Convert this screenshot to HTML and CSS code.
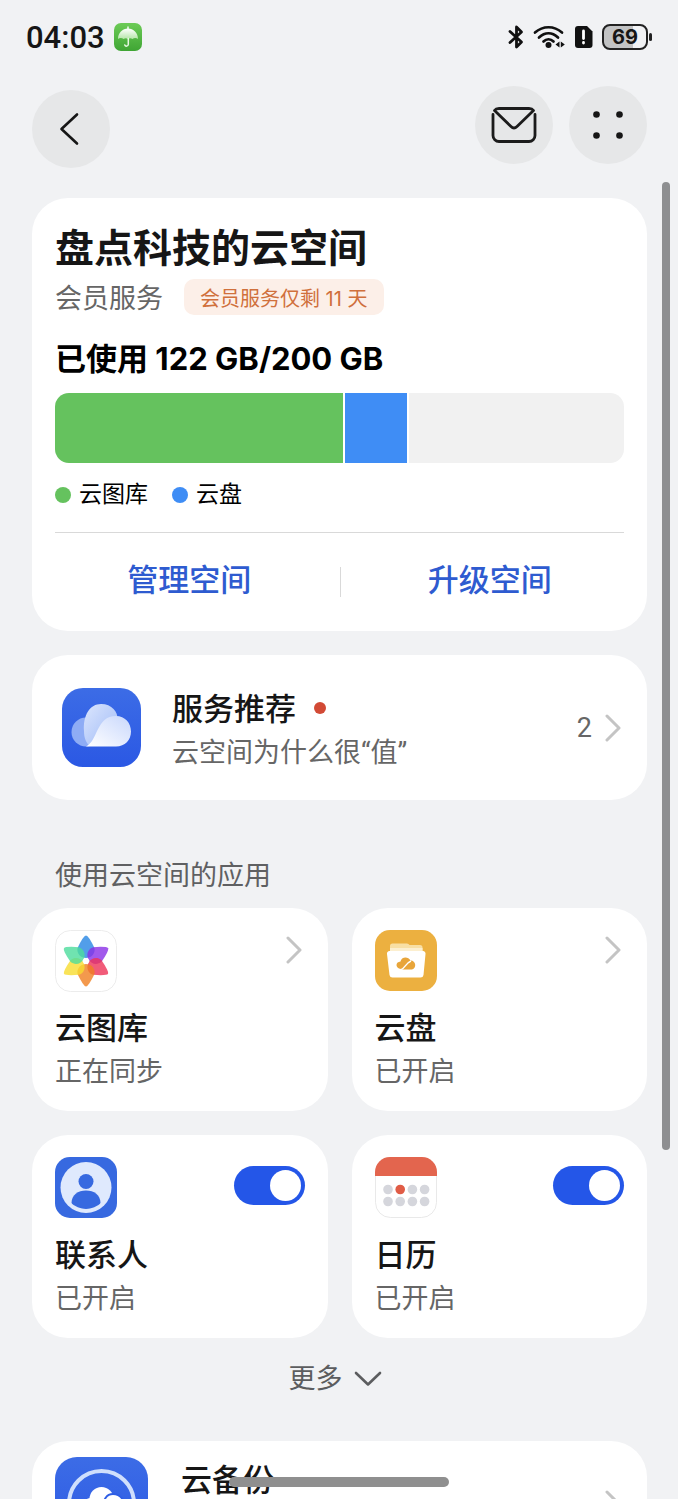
FILE: index.html
```html
<!DOCTYPE html>
<html lang="zh-CN">

<head>
  <meta charset="UTF-8">
  <meta name="viewport" content="width=device-width, initial-scale=1.0">
  <title>云空间</title>

  <link rel="stylesheet" href="styles.css">
</head>

<body>
  <div class="status-bar">
    <span class="time">04:03</span>
    <svg class="umbrella" width="28" height="28" viewBox="0 0 28 28" aria-hidden="true">
      <defs>
        <linearGradient id="leaf" x1="0" y1="0" x2="0" y2="1">
          <stop offset="0" stop-color="#6ccb56" />
          <stop offset="1" stop-color="#3fa534" />
        </linearGradient>
        <linearGradient id="canopy" x1="0" y1="0" x2="0" y2="1">
          <stop offset="0" stop-color="#fff" />
          <stop offset="1" stop-color="#b5e6a8" />
        </linearGradient>
      </defs>
      <rect width="28" height="28" rx="7" fill="url(#leaf)" />
      <path d="M14 4v2" stroke="#fff" stroke-width="1.4" stroke-linecap="round" />
      <path d="M4 16C4 10 8.500 5.500 14 5.500S24 10 24 16C22.500 14.800 20 14.800 18.500 16C17 14.900 15.500 14.900 14 16C12.500 14.900 11 14.900 9.500 16C8 14.800 5.500 14.800 4 16Z" fill="url(#canopy)" />
      <path d="M14.300 15.500V21.500a1.800 1.800 0 0 1-3.500 .4" fill="none" stroke="#e8f8e4" stroke-width="1.500" stroke-linecap="round" />
    </svg>

    <div class="status-icons">
      <svg width="16" height="24" viewBox="0 0 16 24" fill="none" stroke="#111" stroke-width="2.800" stroke-linejoin="round" stroke-linecap="round" aria-hidden="true">
        <path d="M2 6.500L13.500 17L8.500 22V2L13.500 7L2 17.500" />
      </svg>
      <svg width="32" height="24" viewBox="0 0 32 24" fill="none" stroke="#111" stroke-width="2.700" stroke-linecap="round" aria-hidden="true">
        <path d="M2 7.500C10 .5 21 .5 29 7.500" />
        <path d="M6 12.500C12 7 19 7 25 12.500" />
        <path d="M10.500 16.500C13.500 13.500 17.500 13.500 20.500 16.500" />
        <circle cx="15.500" cy="20" r="3" fill="#111" stroke="none" />
        <path d="M26.500 16.500v6l-4-3zM27.800 16.500v6l4-3z" fill="#111" stroke="none" />
      </svg>
      <svg width="19" height="24" viewBox="0 0 19 24" aria-hidden="true">
        <path d="M4 1H13L18.500 6.500V20a3 3 0 0 1-3 3H4a3 3 0 0 1-3-3V4a3 3 0 0 1 3-3z" fill="#111" />
        <path d="M9.500 6v7.500M9.500 17.500v.5" stroke="#fff" stroke-width="2.800" stroke-linecap="round" />
      </svg>
      <div class="battery"><span class="battery-level">69</span></div>
    </div>
  </div>

  <header class="toolbar">
    <button class="round-btn back" aria-label="返回">
      <svg width="24" height="34" viewBox="0 0 24 34" fill="none" stroke="#161616" stroke-width="2.600" stroke-linecap="round" stroke-linejoin="round">
        <path d="M18 2.500L2.500 17L18 31.500" />
      </svg>
    </button>
    <button class="round-btn" aria-label="消息">
      <svg width="46" height="38" viewBox="0 0 46 38" fill="none" stroke="#1b1b1b" stroke-width="2.800" stroke-linecap="round" stroke-linejoin="round">
        <path d="M2 8.500V29.500a6 6 0 0 0 6 6H38a6 6 0 0 0 6-6V8.500" />
        <path d="M3.500 4.500C4.500 3 6 2.500 8 2.500H38C40 2.500 41.500 3 42.500 4.500L26 20.500C24 22.500 22 22.500 20 20.500Z" />
      </svg>
    </button>
    <button class="round-btn" aria-label="更多选项">
      <svg width="32" height="30" viewBox="0 0 32 30" fill="#161616">
        <circle cx="4.500" cy="4.500" r="3.300" />
        <circle cx="27.500" cy="4.500" r="3.300" />
        <circle cx="4.500" cy="25.500" r="3.300" />
        <circle cx="27.500" cy="25.500" r="3.300" />
      </svg>
    </button>
  </header>

  <main>
    <section class="card storage">
      <h1>盘点科技的云空间</h1>
      <div class="member">
        <span class="member-label">会员服务</span>
        <span class="chip">会员服务仅剩 11 天</span>
      </div>
      <p class="usage">已使用 122 GB/200 GB</p>
      <div class="meter">
        <div class="photos" style="width: 50.7%"></div>
        <div class="drive" style="width: 10.9%"></div>
        <div class="free"></div>
      </div>
      <ul class="legend">
        <li class="photos-key">云图库</li>
        <li class="drive-key">云盘</li>
      </ul>
      <div class="actions">
        <button>管理空间</button>
        <button>升级空间</button>
      </div>
    </section>

    <a class="card service" href="#">
      <svg width="79" height="79" viewBox="0 0 79 79" aria-hidden="true">
        <defs>
          <linearGradient id="blue" x1="0" y1="0" x2="0" y2="1">
            <stop offset="0" stop-color="#3c6ce6" />
            <stop offset="1" stop-color="#2b58e4" />
          </linearGradient>
          <linearGradient id="puff" x1="0" y1="0" x2="1" y2="1">
            <stop offset="0" stop-color="#dce6fd" />
            <stop offset="1" stop-color="#9db9f7" />
          </linearGradient>
          <linearGradient id="front" x1="1" y1="0" x2="0" y2="1">
            <stop offset="0" stop-color="#c9d8fc" />
            <stop offset="1" stop-color="#fff" />
          </linearGradient>
        </defs>
        <rect width="79" height="79" rx="21" fill="url(#blue)" />
        <circle cx="24" cy="44" r="14.500" fill="#8eacf5" />
        <path d="M22 43C21 27 28 16 39 16C50 16 56 24 55.500 31L28 58C24 55 22 50 22 43Z" fill="url(#puff)" />
        <path d="M24 58.500C36 53 34 28 54 28C63 28 69 35 69 43.500C69 52 63 58.500 54 58.500Z" fill="url(#front)" />
      </svg>
      <div class="service-text">
        <h2>服务推荐<i class="red-dot"></i></h2>
        <p class="sub">云空间为什么很“值”</p>
      </div>
      <span class="count">2</span>
      <svg class="chevron" width="16" height="28" viewBox="0 0 16 28"><path d="M2 2L14 14L2 26" /></svg>
    </a>

    <h3 class="section-title">使用云空间的应用</h3>

    <section class="apps">
      <a class="card app" href="#">
        <div class="app-top">
          <svg width="62" height="62" viewBox="0 0 62 62" aria-hidden="true">
            <defs>
              <path id="petal" d="M31 28C26 28 21.500 24 22.500 18Q28.500 5.500 31 5.500T39.500 18C40.500 24 36 28 31 28Z" />
            </defs>
            <rect x=".5" y=".5" width="61" height="61" rx="15" fill="#fff" stroke="#ececec" />
            <g class="petals">
              <use href="#petal" fill="#2786e4" />
              <use href="#petal" fill="#8a2fe6" transform="rotate(60 31 31)" />
              <use href="#petal" fill="#ee3358" transform="rotate(120 31 31)" />
              <use href="#petal" fill="#f08020" transform="rotate(180 31 31)" />
              <use href="#petal" fill="#f8dc30" transform="rotate(240 31 31)" />
              <use href="#petal" fill="#4cdc9c" transform="rotate(300 31 31)" />
            </g>
            <circle cx="31" cy="31" r="3" fill="#fff" />
          </svg>
          <svg class="chevron" width="16" height="28" viewBox="0 0 16 28"><path d="M2 2L14 14L2 26" /></svg>
        </div>
        <h2>云图库</h2>
        <p class="sub">正在同步</p>
      </a>

      <a class="card app" href="#">
        <div class="app-top">
          <svg width="62" height="62" viewBox="0 0 62 62" aria-hidden="true">
            <rect width="62" height="61" rx="15" fill="#ecb040" />
            <path d="M15 22V16a2.500 2.500 0 0 1 2.500-2.500H32a3 3 0 0 1 2.500 1.500H45a2.500 2.500 0 0 1 2.500 2.500V22Z" fill="#f8dfa4" />
            <path d="M15 18H47.500V22H15Z" fill="#fcefcf" />
            <path d="M14.500 21H48a2.500 2.500 0 0 1 2.500 3L48.500 45a3 3 0 0 1-3 2.500H17.500a3 3 0 0 1-3-2.500L12 24a2.500 2.500 0 0 1 2.500-3Z" fill="#fff" />
            <path d="M24 38.500C20.500 37 20.500 32 25.500 31.500C26 27 33 25.500 35.500 30.500C41 30.500 42 38 37 39.500H28Z" fill="#e8a53a" />
            <path d="M25.500 40C30 39 30 33.500 36 31" fill="none" stroke="#fff" stroke-width="1.400" />
          </svg>
          <svg class="chevron" width="16" height="28" viewBox="0 0 16 28"><path d="M2 2L14 14L2 26" /></svg>
        </div>
        <h2>云盘</h2>
        <p class="sub">已开启</p>
      </a>

      <div class="card app">
        <div class="app-top">
          <svg width="62" height="62" viewBox="0 0 62 62" aria-hidden="true">
            <defs>
              <clipPath id="face"><circle cx="31" cy="30.500" r="21.500" /></clipPath>
            </defs>
            <rect width="62" height="61" rx="15" fill="#3769e0" />
            <circle cx="31" cy="30.500" r="25.500" fill="#dfe9fd" />
            <circle cx="31" cy="24.500" r="7.500" fill="#3769e0" />
            <path d="M16.500 46C16.500 38 23 33.500 31 33.500S45.500 38 45.500 46C45.500 50 38 52 31 52S16.500 50 16.500 46Z" fill="#3769e0" clip-path="url(#face)" />
          </svg>
          <input class="switch" type="checkbox" id="contacts" checked>
        </div>
        <h2><label for="contacts">联系人</label></h2>
        <p class="sub">已开启</p>
      </div>

      <div class="card app">
        <div class="app-top">
          <svg width="62" height="62" viewBox="0 0 62 62" aria-hidden="true">
            <rect x=".5" y=".5" width="61" height="60" rx="15" fill="#fff" stroke="#e9e9e9" />
            <path d="M0 19V15A15 15 0 0 1 15 0H47A15 15 0 0 1 62 15V19Z" fill="#e3654e" />
            <g fill="#d5d6dc">
              <circle cx="13" cy="32.500" r="4.800" />
              <circle cx="25.200" cy="32.500" r="4.800" fill="#e05c46" />
              <circle cx="37.400" cy="32.500" r="4.800" />
              <circle cx="49.600" cy="32.500" r="4.800" />
              <circle cx="13" cy="44.500" r="4.800" />
              <circle cx="25.200" cy="44.500" r="4.800" />
              <circle cx="37.400" cy="44.500" r="4.800" />
              <circle cx="49.600" cy="44.500" r="4.800" />
            </g>
          </svg>
          <input class="switch" type="checkbox" id="calendar" checked>
        </div>
        <h2><label for="calendar">日历</label></h2>
        <p class="sub">已开启</p>
      </div>
    </section>

    <button class="more">更多
      <svg width="28" height="16" viewBox="0 0 28 16" fill="none" stroke="#5c5d5f" stroke-width="2.600" stroke-linecap="round" stroke-linejoin="round">
        <path d="M2 2L14 13.500L26 2" />
      </svg>
    </button>

    <a class="card backup" href="#">
      <svg width="93" height="93" viewBox="0 0 93 93" aria-hidden="true">
        <rect width="93" height="93" rx="22" fill="url(#blue)" />
        <circle cx="46.500" cy="46.500" r="32.500" fill="none" stroke="#cfdffc" stroke-width="4" />
        <circle cx="46.500" cy="42" r="12" fill="#fff" />
        <circle cx="36" cy="50" r="9" fill="#fff" />
        <path d="M40 60C50 57 45 37 58 37C66 37 70 44 70 51S65 61 58 61Z" fill="#fff" stroke="#2f5ee5" stroke-width="2" />
      </svg>
      <h2>云备份</h2>
      <svg class="chevron" width="16" height="28" viewBox="0 0 16 28"><path d="M2 2L14 14L2 26" /></svg>
    </a>
  </main>

  <div class="scrollbar"></div>
  <div class="home-indicator"></div>
</body>

</html>
```

FILE: styles.css
```css
* {
  box-sizing: border-box;
}

body {
  background: #f1f2f4;
  color: #161616;
  font-family: Roboto, "Noto Sans CJK SC", sans-serif;
  height: 100vh;
  margin: 0;
  overflow: hidden;
  padding: 0 31px 0 32px;
  position: relative;
}

h1,
h2,
h3,
p,
ul {
  margin: 0;
  padding: 0;
}

h2 {
  font-size: 31px;
  font-weight: 500;
  line-height: 44px;
}

a {
  color: inherit;
  text-decoration: none;
}

button {
  background: none;
  border: 0;
  color: inherit;
  cursor: pointer;
  font-family: inherit;
  padding: 0;
}

svg {
  display: block;
  flex: none;
}

/* status bar */
.status-bar {
  align-items: center;
  display: flex;
  height: 74px;
  margin: 0 -6px;
}

.time {
  font-size: 31px;
  font-weight: 500;
}

.umbrella {
  margin-left: 9px;
}

.status-icons {
  align-items: center;
  display: flex;
  gap: 9px;
  margin-left: auto;
}

.battery {
  background: linear-gradient(to right, #c2c3c4 69%, #f1f2f4 69%);
  border: 2px solid #222;
  border-radius: 8px;
  height: 26px;
  margin-right: 5px;
  position: relative;
  width: 46px;
}

.battery::after {
  background: #222;
  border-radius: 2px;
  content: "";
  height: 8px;
  position: absolute;
  right: -6px;
  top: 7px;
  width: 3px;
}

.battery-level {
  display: block;
  font-family: Inter, sans-serif;
  font-size: 20px;
  font-weight: 700;
  line-height: 22px;
  text-align: center;
}

/* toolbar */
.toolbar {
  display: flex;
  gap: 16px;
  margin: 12px 0 30px;
}

.round-btn {
  align-items: center;
  background: #e6e7e8;
  border-radius: 50%;
  display: flex;
  height: 78px;
  justify-content: center;
  width: 78px;
}

.back {
  margin: 4px auto 0 0;
}

/* cards */
.card {
  background: #fff;
  border-radius: 36px;
  display: block;
}

.sub {
  color: #666;
  font-size: 27px;
  line-height: 42px;
}

.chevron {
  fill: none;
  stroke: #c4c4c4;
  stroke-linecap: round;
  stroke-linejoin: round;
  stroke-width: 3;
}

.storage {
  padding: 27px 23px 10px;
}

.storage h1 {
  font-size: 39px;
  font-weight: 700;
  line-height: 48px;
}

.member {
  display: flex;
  gap: 21px;
  line-height: 40px;
  margin-top: 6px;
}

.member-label {
  color: #666;
  font-size: 27px;
}

.chip {
  background: #fcefe8;
  border-radius: 10px;
  color: #d0703c;
  font-family: Inter, "Noto Sans CJK SC", sans-serif;
  font-size: 20px;
  height: 36px;
  padding: 0 16px;
}

.usage {
  color: #000;
  font-family: Inter, "Noto Sans CJK SC", sans-serif;
  font-size: 31px;
  font-weight: 700;
  line-height: 40px;
  margin-top: 20px;
}

.meter {
  border-radius: 14px;
  display: flex;
  gap: 2px;
  height: 70px;
  margin-top: 14px;
  overflow: hidden;
}

.photos,
.photos-key::before {
  background: #65c25e;
}

.drive,
.drive-key::before {
  background: #3f8df5;
}

.free {
  background: #f1f1f1;
  flex: 1;
}

.legend {
  border-bottom: 1px solid #d9d9d9;
  color: #000;
  display: flex;
  font-size: 23px;
  gap: 24px;
  line-height: 32px;
  list-style: none;
  margin-top: 16px;
  padding-bottom: 21px;
}

.legend li {
  align-items: center;
  display: flex;
  gap: 8px;
}

.legend li::before {
  border-radius: 50%;
  content: "";
  height: 16px;
  width: 16px;
}

.actions {
  display: flex;
  margin: 0 -16px;
}

.actions button {
  color: #2e5bd0;
  flex: 1;
  font-size: 31px;
  font-weight: 500;
  height: 88px;
}

.actions button + button {
  background: linear-gradient(#d9d9d9, #d9d9d9) left 34px / 1px 30px no-repeat;
}

/* service card */
.service {
  align-items: center;
  display: flex;
  margin-top: 24px;
  min-height: 145px;
  padding: 0 26px 0 30px;
}

.service-text {
  flex: 1;
  padding: 6px 0 0 31px;
}

.red-dot {
  background: #d24a35;
  border-radius: 50%;
  display: inline-block;
  height: 12px;
  margin-left: 18px;
  vertical-align: 6px;
  width: 12px;
}

.count {
  color: #666;
  font-size: 27px;
  margin-right: 13px;
}

/* apps */
.section-title {
  color: #5f6062;
  font-size: 27px;
  font-weight: 400;
  line-height: 40px;
  margin: 56px 23px 12px;
}

.apps {
  display: grid;
  gap: 24px;
  grid-template-columns: 1fr 1fr;
}

.app {
  padding: 22px 23px 18px;
}

.app-top {
  display: flex;
  justify-content: space-between;
  margin-bottom: 15px;
}

.app-top .chevron {
  margin: 6px 3px 0 0;
}

.switch {
  appearance: none;
  background: #2456e8;
  border-radius: 20px;
  cursor: pointer;
  display: flex;
  height: 39px;
  justify-content: flex-end;
  margin: 9px 0 0;
  padding: 4px;
  width: 71px;
}

.switch::before {
  background: #fff;
  border-radius: 50%;
  content: "";
  height: 31px;
  width: 31px;
}

.switch:not(:checked) {
  background: #d5d6dc;
  justify-content: flex-start;
}

.petals use {
  opacity: 0.8;
}

.more {
  align-items: center;
  color: #5c5d5f;
  display: flex;
  font-size: 27px;
  gap: 11px;
  line-height: 40px;
  margin: 21px auto 42px;
  padding-right: 9px;
}

/* backup card */
.backup {
  display: flex;
  padding: 16px 26px 16px 23px;
}

.backup h2 {
  flex: 1;
  padding: 2px 0 0 33px;
}

.backup .chevron {
  align-self: center;
}

/* overlays */
.scrollbar {
  background: #8e8f91;
  border-radius: 4px;
  height: 968px;
  position: absolute;
  right: 8px;
  top: 182px;
  width: 8px;
}

.home-indicator {
  background: #8f8f8f;
  border-radius: 5px;
  bottom: 12px;
  height: 10px;
  left: 50%;
  margin-left: -110px;
  position: absolute;
  width: 220px;
}
```
